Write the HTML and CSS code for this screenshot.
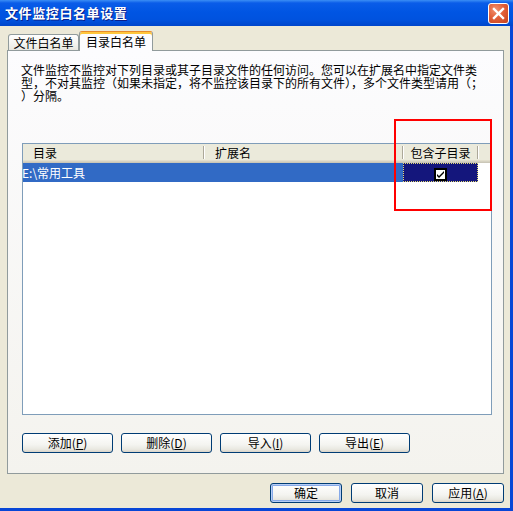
FILE: index.html
```html
<!DOCTYPE html>
<html lang="zh-CN">
<head>
    <meta charset="UTF-8">
    <meta name="viewport" content="width=device-width, initial-scale=1.0">
    <title>文件监控白名单设置</title>
    <link rel="stylesheet" href="styles.css">
</head>
<body>
    <div class="window">
        <div class="titlebar">
            <span class="title">文件监控白名单设置</span>
            <button class="close" title="关闭">
                <svg width="13" height="13" viewBox="0 0 13 13">
                    <path d="M2 2L11 11M11 2L2 11" stroke="#fff" stroke-width="2.4" stroke-linecap="square"/>
                </svg>
            </button>
        </div>
        <div class="frame">
            <div class="tabs">
                <div class="tab">文件白名单</div>
                <div class="tab active">目录白名单</div>
            </div>
            <div class="panel">
                <p class="desc">文件监控不监控对下列目录或其子目录文件的任何访问。您可以在扩展名中指定文件类<br>型，不对其监控（如果未指定，将不监控该目录下的所有文件），多个文件类型请用（；<br>）分隔。</p>
                <div class="list">
                    <div class="list-head">
                        <div class="col col-dir">目录</div>
                        <span class="sep"></span>
                        <div class="col col-ext">扩展名</div>
                        <span class="sep"></span>
                        <div class="col col-sub">包含子目录</div>
                        <span class="sep"></span>
                    </div>
                    <div class="row">
                        <div class="cell cell-main">E:\常用工具</div>
                        <div class="cell cell-sub">
                            <svg width="13" height="13" viewBox="0 0 13 13">
                                <rect x="0.5" y="0.5" width="12" height="12" fill="#fff" stroke="#000"/>
                                <rect x="1.5" y="1.5" width="10" height="10" fill="none" stroke="#000"/>
                                <path d="M3 6L5 8L10 3V5L5 10L3 8Z" fill="#000"/>
                            </svg>
                        </div>
                    </div>
                </div>
                <div class="actions">
                    <button class="btn">添加(<u>P</u>)</button>
                    <button class="btn">删除(<u>D</u>)</button>
                    <button class="btn">导入(<u>I</u>)</button>
                    <button class="btn">导出(<u>E</u>)</button>
                </div>
            </div>
            <div class="footer">
                <button class="btn small default">确定</button>
                <button class="btn small">取消</button>
                <button class="btn small">应用(<u>A</u>)</button>
            </div>
        </div>
        <div class="mark"></div>
    </div>
</body>
</html>
```

FILE: styles.css
```css
body{
    margin:0;
    background-color:#ECE9D8;
    font-family:"Noto Sans CJK SC", sans-serif;
    font-size:12px;
    color:#000;
}
.window{
    position:relative;
    width:513px;
    height:511px;
    display:flex;
    flex-direction:column;
    overflow:hidden;
}
.titlebar{
    height:26px;
    flex:none;
    display:flex;
    align-items:center;
    justify-content:space-between;
    padding:0 4px 0 5px;
    background:linear-gradient(#3B8EF5 0, #0A5CE8 3px, #0055E3 12px, #0052DE 20px, #0046CB 26px);
}
.title{
    color:#fff;
    font-weight:bold;
    font-size:13px;
    letter-spacing:0.6px;
    line-height:26px;
    text-shadow:1px 1px 0 #0A1F8A;
}
.close{
    width:21px;
    height:21px;
    padding:0;
    margin-top:1px;
    display:flex;
    align-items:center;
    justify-content:center;
    border:1px solid #fff;
    border-radius:3px;
    background:radial-gradient(circle at 35% 30%, #F29270 0, #E2603A 45%, #C5411C 100%);
}
.frame{
    flex:1;
    display:flex;
    flex-direction:column;
    padding:5px 6px 0 7px;
    border-right:3px solid #0846D6;
    border-bottom:3px solid #0846D6;
}
.tabs{
    position:relative;
    z-index:1;
    display:flex;
    align-items:flex-end;
    height:20px;
    margin:0 0 -1px 1px;
}
.tab{
    box-sizing:border-box;
    width:71px;
    height:16px;
    margin-bottom:1px;
    border:1px solid #919B9C;
    border-bottom:none;
    border-radius:3px 3px 0 0;
    background:linear-gradient(#FFFFFF, #F3F3EF 60%, #E8E7E0);
    text-align:center;
    line-height:15px;
}
.tab.active{
    width:74px;
    height:20px;
    margin-bottom:0;
    border-top:1px solid #E68B2C;
    box-shadow:inset 0 2px 0 #FFC73C;
    background:#FCFCFE;
    line-height:20px;
}
.panel{
    box-sizing:border-box;
    width:497px;
    height:424px;
    padding:12px 0 0 14px;
    border:1px solid #919B9C;
    background:linear-gradient(#FCFCFE, #F4F3EE);
}
.desc{
    margin:0 0 0 -1px;
    line-height:13px;
    white-space:nowrap;
}
.list{
    box-sizing:border-box;
    width:470px;
    height:272px;
    margin-top:41px;
    border:1px solid #7F9DB9;
    background-color:#fff;
}
.list-head{
    display:flex;
    align-items:center;
    height:19px;
    background:linear-gradient(#EBEADB 0 16px, #E2DECD 16px 17px, #D6D2C2 17px 18px, #CBC7B8 18px);
}
.col{
    line-height:18px;
    height:19px;
}
.col-dir{
    width:170px;
    padding-left:10px;
}
.col-ext{
    width:187px;
    padding-left:10px;
}
.col-sub{
    width:73px;
    text-align:center;
}
.sep{
    width:0;
    height:13px;
    margin-bottom:2px;
    border-left:1px solid #ACA899;
    border-right:1px solid #fff;
}
.row{
    display:flex;
    height:19px;
}
.cell-main{
    width:380px;
    background-color:#316AC5;
    color:#fff;
    line-height:19px;
    text-indent:-1px;
    white-space:nowrap;
}
.cell-sub{
    box-sizing:border-box;
    width:75px;
    display:flex;
    align-items:flex-end;
    justify-content:center;
    padding-bottom:1px;
    background-color:#14167C;
    outline:1px dotted #E4DC74;
    outline-offset:-1px;
}
.actions{
    display:flex;
    gap:8px;
    margin-top:18px;
}
.btn{
    box-sizing:border-box;
    width:91px;
    height:20px;
    padding:0;
    border:1px solid #003C74;
    border-radius:3px;
    background:linear-gradient(#FFFFFF, #F4F4F0 60%, #E9E8E1 85%, #D8D3C8);
    font-family:"Noto Sans CJK SC", sans-serif;
    font-size:12px;
    line-height:18px;
    color:#000;
}
.footer{
    display:flex;
    justify-content:flex-end;
    gap:9px;
    margin-top:9px;
}
.btn.small{
    width:72px;
}
.btn.default{
    box-shadow:inset 0 0 0 1px #B7CEF5, inset 0 0 0 2px #86A9E8;
}
.mark{
    position:absolute;
    left:394px;
    top:119px;
    width:98px;
    height:92px;
    box-sizing:border-box;
    border:2px solid #FF0000;
}
```
